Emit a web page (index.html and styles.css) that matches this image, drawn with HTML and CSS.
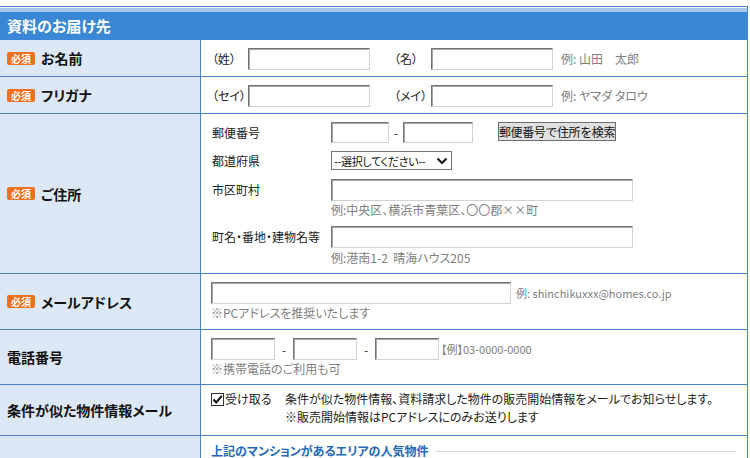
FILE: index.html
```html
<!DOCTYPE html>
<html lang="ja">
<head>
<meta charset="utf-8">
<title>資料のお届け先</title>
<link rel="stylesheet" href="styles.css">
</head>
<body>
<div class="form">
  <div class="hd">
    <div class="hd-stripe"></div>
    <div class="hd-bar">資料のお届け先</div>
  </div>

  <div class="row r-name">
    <div class="lbl"><span class="req">必須</span>お名前</div>
    <div class="val val-inline">
      <span class="pre w36">（姓）</span><input class="tx w122" type="text">
      <span class="pre w37 ml24">（名）</span><input class="tx w122" type="text">
      <span class="ex">例: 山田　太郎</span>
    </div>
  </div>

  <div class="row r-name">
    <div class="lbl"><span class="req">必須</span>フリガナ</div>
    <div class="val val-inline">
      <span class="pre w36">（セイ）</span><input class="tx w122" type="text">
      <span class="pre w37 ml24">（メイ）</span><input class="tx w122" type="text">
      <span class="ex">例: ヤマダ タロウ</span>
    </div>
  </div>

  <div class="row r-addr">
    <div class="lbl"><span class="req">必須</span>ご住所</div>
    <div class="val val-addr">
      <div class="aline">
        <span class="alabel">郵便番号</span>
        <input class="tx w58 h21" type="text">
        <span class="dash">-</span>
        <input class="tx w70 h21" type="text">
        <button class="btn" type="button">郵便番号で住所を検索</button>
      </div>
      <div class="aline mt8">
        <span class="alabel h19">都道府県</span>
        <span class="sel"><span class="sel-text">--選択してください--</span><svg class="chev" width="12" height="8" viewBox="0 0 12 8"><polyline points="1.5,1.5 6,6 10.5,1.5" fill="none" stroke="#111" stroke-width="2.2"/></svg></span>
      </div>
      <div class="aline mt9">
        <span class="alabel">市区町村</span>
        <div class="acol">
          <input class="tx w302" type="text">
          <div class="hint mt2">例:中央区、横浜市青葉区、〇〇郡××町</div>
        </div>
      </div>
      <div class="aline mt9">
        <span class="alabel">町名・番地・建物名等</span>
        <div class="acol">
          <input class="tx w302" type="text">
          <div class="hint mt3">例:港南1-2&nbsp;&nbsp;晴海ハウス205</div>
        </div>
      </div>
    </div>
  </div>

  <div class="row r-mail">
    <div class="lbl"><span class="req">必須</span>メールアドレス</div>
    <div class="val val-stack">
      <div class="iline">
        <input class="tx w300" type="text">
        <span class="ex ex-sm">例: shinchikuxxx@homes.co.jp</span>
      </div>
      <div class="hint mt2">※PCアドレスを推奨いたします</div>
    </div>
  </div>

  <div class="row r-tel">
    <div class="lbl">電話番号</div>
    <div class="val val-stack">
      <div class="iline">
        <input class="tx w64" type="text">
        <span class="dash w18">-</span>
        <input class="tx w64" type="text">
        <span class="dash w18">-</span>
        <input class="tx w64" type="text">
        <span class="ex ex-num">【例】03-0000-0000</span>
      </div>
      <div class="hint mt2">※携帯電話のご利用も可</div>
    </div>
  </div>

  <div class="row r-opt">
    <div class="lbl">条件が似た物件情報メール</div>
    <div class="val val-opt">
      <label class="chk"><span class="box"><svg width="11" height="11" viewBox="0 0 11 11"><polyline points="1.5,5.5 4.2,8.5 9.8,1.8" fill="none" stroke="#111" stroke-width="2"/></svg></span>受け取る</label>
      <div class="opt-text">
        <div>条件が似た物件情報、資料請求した物件の販売開始情報をメールでお知らせします。</div>
        <div>※販売開始情報はPCアドレスにのみお送りします</div>
      </div>
    </div>
  </div>

  <div class="row r-last">
    <div class="lbl"></div>
    <div class="val val-last">
      <span class="sec-title">上記のマンションがあるエリアの人気物件</span>
      <span class="sec-line"></span>
    </div>
  </div>
</div>
</body>
</html>
```

FILE: styles.css
```css
* { box-sizing: border-box; }

body {
  margin: 0;
  background: #fff;
  font-family: "Noto Sans CJK JP", "Noto Sans", sans-serif;
  font-size: 12px;
  color: #222;
  font-feature-settings: "palt";
  overflow: hidden;
}

.form {
  width: 748px;
  margin-top: 6px;
  border-top: 1px solid #4a84c4;
  border-right: 1px solid #4a84c4;
}

.hd { padding-top: 1px; }
.hd-stripe { height: 4px; background: #a6c6ea; }
.hd-bar {
  height: 28px;
  background: #3a87d6;
  color: #fff;
  font-weight: bold;
  font-size: 15px;
  line-height: 28px;
  padding-left: 7px;
}

.row {
  display: flex;
  border-bottom: 1px solid #4a84c4;
}
.r-name { height: 37px; }
.r-addr { height: 160px; }
.r-mail { height: 56px; }
.r-tel { height: 55px; }
.r-opt { height: 51px; }
.r-last { height: 30px; border-bottom: none; }

.lbl {
  width: 201px;
  flex: none;
  background: #dce8f7;
  border-right: 1px solid #4a84c4;
  display: flex;
  align-items: center;
  padding-left: 7px;
  font-weight: bold;
  font-size: 14px;
  color: #111;
}

.req {
  display: inline-flex;
  align-items: center;
  justify-content: center;
  width: 28px;
  height: 13px;
  margin-right: 6px;
  background: #f07020;
  border-radius: 2px;
  color: #fff;
  font-size: 10px;
  font-weight: bold;
  line-height: 13px;
}

.val { flex: 1; min-width: 0; }

.val-inline {
  display: flex;
  align-items: center;
  padding-left: 11px;
  padding-top: 1px;
}

.pre { flex: none; }
.w36 { width: 36px; }
.w37 { width: 37px; }
.ml24 { margin-left: 24px; }

.tx {
  height: 22px;
  margin: 0;
  padding: 0 2px;
  border: 1px solid;
  border-color: #727272 #d2d2d2 #d2d2d2 #727272;
  box-shadow: inset 1px 1px 0 #a8a8a8;
  background: #fff;
  font: inherit;
  flex: none;
}
.h21 { height: 21px; }
.w58 { width: 58px; }
.w64 { width: 64px; }
.w70 { width: 70px; }
.w122 { width: 122px; }
.w300 { width: 300px; }
.w302 { width: 302px; }

.ex {
  margin-left: 8px;
  color: #808080;
  white-space: nowrap;
}
.ex-sm { margin-left: 5px; font-size: 11px; }
.ex-num { margin-left: 2px; font-size: 11px; }

.val-addr {
  padding: 8px 0 0 11px;
}
.aline {
  display: flex;
  align-items: flex-start;
}
.alabel {
  width: 119px;
  flex: none;
  height: 21px;
  line-height: 21px;
  color: #222;
}
.alabel.h19 { height: 19px; line-height: 19px; }
.acol { display: flex; flex-direction: column; }

.dash {
  width: 14px;
  flex: none;
  text-align: center;
  line-height: 21px;
  color: #333;
}
.dash.w18 { width: 18px; }

.btn {
  margin: 0 0 0 25px;
  width: 118px;
  height: 19px;
  padding: 0;
  border: 1px solid #6e6e6e;
  background: #e1e1e1;
  font-family: inherit;
  font-size: 12px;
  letter-spacing: -0.4px;
  line-height: 17px;
  color: #111;
  white-space: nowrap;
  overflow: hidden;
}

.sel {
  position: relative;
  display: block;
  width: 121px;
  height: 19px;
  border: 1px solid #767676;
  background: #fff;
  padding-left: 2px;
  line-height: 17px;
  color: #111;
  white-space: nowrap;
}
.sel-text {
  font-size: 11px;
  letter-spacing: -0.3px;
}
.chev {
  position: absolute;
  right: 3px;
  top: 5px;
}

.mt2 { margin-top: 2px; }
.mt3 { margin-top: 3px; }
.mt8 { margin-top: 8px; }
.mt9 { margin-top: 9px; }

.hint {
  color: #808080;
  line-height: 14px;
  white-space: nowrap;
}

.val-stack {
  padding: 8px 0 0 10px;
  display: flex;
  flex-direction: column;
}
.iline {
  display: flex;
  align-items: center;
}

.val-opt {
  display: flex;
  padding: 5px 0 0 10px;
  line-height: 18px;
}
.chk {
  display: flex;
  align-items: center;
  width: 74px;
  height: 18px;
  flex: none;
}
.box {
  width: 13px;
  height: 13px;
  border: 1px solid #333;
  background: #fff;
  display: flex;
  align-items: center;
  justify-content: center;
  margin-right: 1px;
}
.opt-text { white-space: nowrap; color: #222; }

.val-last {
  display: flex;
  align-items: center;
  padding: 4px 11px 0 10px;
  height: 22px;
  box-sizing: content-box;
}
.sec-title {
  color: #2468b8;
  font-weight: bold;
  font-size: 12px;
  line-height: 16px;
  white-space: nowrap;
}
.sec-line {
  flex: 1;
  height: 1px;
  background: #d8d8d8;
  margin-left: 8px;
}
```
